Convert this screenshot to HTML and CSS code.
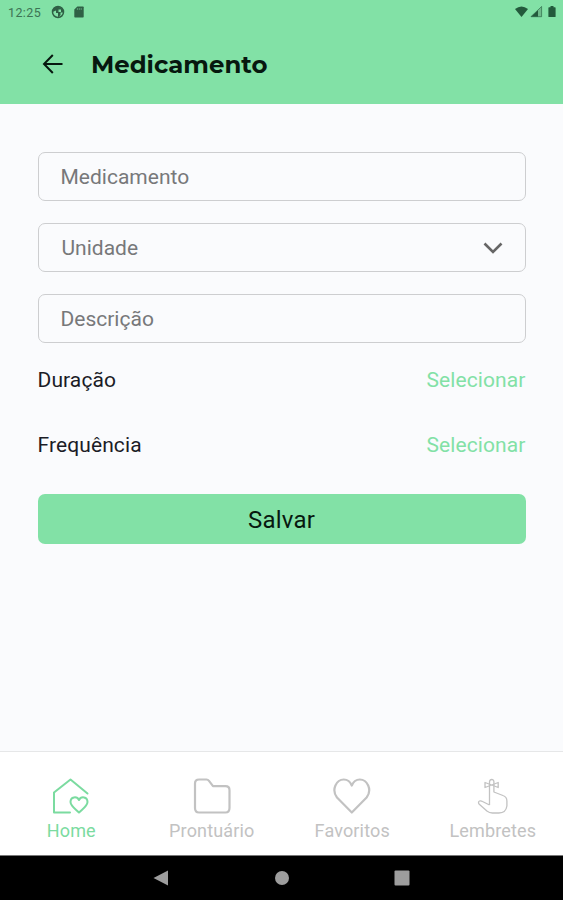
FILE: index.html
```html
<!DOCTYPE html>
<html lang="pt-br">
<head>
    <meta charset="UTF-8">
    <meta name="viewport" content="width=device-width, initial-scale=1.0">
    <title>Medicamento</title>
    <link rel="stylesheet" href="styles.css">
</head>
<body>

    <header class="header">
        <div class="status-bar">
            <span class="hora">12:25</span>
            <svg class="status-app" width="14" height="14" viewBox="0 0 14 14">
                <circle cx="7" cy="7" r="5.5" fill="none" stroke="#2f6045" stroke-width="1.5"/>
                <path d="M1.500 7Q2 2 7 1.500q3.500.5 5 3.500v2.500H9.500V10L7 12.500V8H5V5.500z" fill="#2f6045"/>
                <path d="M7.500 4.500h2.500V7H7.500z" fill="#82e1a6"/>
            </svg>
            <svg class="status-sd" width="10" height="12" viewBox="0 0 10 12">
                <path d="M3.300.5H9q.7 0 .7.7v9.600q0 .7-.7.7H1q-.7 0-.7-.7V3.500z" fill="#2f6045"/>
                <path d="M3.400 2v2M5.300 2v2M7.200 2v2" stroke="#65ab82" stroke-width=".8"/>
            </svg>
            <svg class="status-sinais" width="42" height="14" viewBox="0 0 42 14">
                <path d="M0 4Q6.500-1 13 4L6.500 12z" fill="#235a3c"/>
                <path d="M15.500 12 27 1v11z" fill="#6fba8b"/>
                <path d="M15.500 12 23 5v7z" fill="#235a3c"/>
                <path d="M16 11.700 26.600 1.500v10.200z" fill="none" stroke="#397a55" stroke-width=".8"/>
                <path d="M35.500 1h3v1.300H40q.6 0 .6.600v8.500q0 .6-.6.600h-6q-.6 0-.6-.6V2.900q0-.6.600-.6h1.500z" fill="#235a3c"/>
            </svg>
        </div>
        <div class="titulo-bar">
            <svg class="voltar" width="22" height="22" viewBox="0 0 22 22">
                <path d="M20.500 11H2M10.800 2 2 11l8.800 9" fill="none" stroke="#07180f" stroke-width="2"/>
            </svg>
            <h1>Medicamento</h1>
        </div>
    </header>

    <main class="formulario">
        <div class="campo">Medicamento</div>
        <div class="campo campo-select">
            <span>Unidade</span>
            <svg width="20" height="12" viewBox="0 0 20 12">
                <path d="M1.500 1.500 10 10l8.500-8.500" fill="none" stroke="#666" stroke-width="2.600"/>
            </svg>
        </div>
        <div class="campo">Descrição</div>

        <div class="linha">
            <span>Duração</span>
            <a class="selecionar">Selecionar</a>
        </div>
        <div class="linha">
            <span>Frequência</span>
            <a class="selecionar">Selecionar</a>
        </div>

        <button class="salvar">Salvar</button>
    </main>

    <nav class="menu">
        <a class="menu-item ativo">
            <svg width="38" height="38" viewBox="0 0 38 38" fill="none" stroke="currentColor" stroke-width="2" stroke-linecap="round" stroke-linejoin="round">
                <path d="M18 35.500H2V15.500L18.500 2.500 35.500 16.500"/>
                <path d="M27 35.500C23.500 32 18.500 29 18.500 25c0-5.500 6.500-6 8.500-2 2-4 8.500-3.500 8.500 2 0 4-5 7-8.500 10.500z"/>
            </svg>
            <span>Home</span>
        </a>
        <a class="menu-item">
            <svg width="38" height="38" viewBox="0 0 38 38" fill="none" stroke="currentColor" stroke-width="2.200" stroke-linejoin="round">
                <path d="M6 2.500h7.500q1.500 0 2.500 1.300L20 9.200h12.500q4 0 4 4V31q0 4.500-4 4.500H6q-4 0-4-4.500V6.500q0-4 4-4z"/>
            </svg>
            <span>Prontuário</span>
        </a>
        <a class="menu-item">
            <svg width="38" height="38" viewBox="0 0 38 38" fill="none" stroke="currentColor" stroke-width="2.200" stroke-linejoin="round">
                <path d="M18.800 35.500 4 20.500C-2 12.500 3.500 2.500 10.800 2.500c4 0 6.500 2.300 8 6 1.500-3.700 4-6 8-6 7.300 0 12.800 10 6.800 18z"/>
            </svg>
            <span>Favoritos</span>
        </a>
        <a class="menu-item">
            <svg width="38" height="38" viewBox="0 0 38 38" fill="none" stroke="currentColor" stroke-width="1.300" stroke-linejoin="round">
                <path d="M15.500 28V5q0-2.500 2.200-2.500T19.900 5v10l9 3.500q4 1.300 4 5.500v5q-1 7-8 7h-6.500q-3 0-5.500-2L5 27q-1.200-2 .5-3 1.500-.5 3 .5l7 3.500"/>
                <path d="M17.700 8 11 5.500v5zM17.700 8l6.500-2.500v5z"/>
            </svg>
            <span>Lembretes</span>
        </a>
    </nav>

    <footer class="sistema">
        <svg width="16" height="18" viewBox="0 0 16 18"><path d="M.5 9 15 1.500v15z" fill="#9d9d9d"/></svg>
        <svg width="16" height="18" viewBox="0 0 16 18"><circle cx="8" cy="9" r="7" fill="#9d9d9d"/></svg>
        <svg width="16" height="18" viewBox="0 0 16 18"><rect x=".5" y="1.500" width="15" height="15" rx="1" fill="#9d9d9d"/></svg>
    </footer>

</body>
</html>
```
FILE: styles.css
```css
* {
    box-sizing: border-box;
}
body {
    margin: 0;
    height: 900px;
    display: flex;
    flex-direction: column;
    font-family: Roboto, sans-serif;
    background-color: #fafbfd;
    overflow: hidden;
}
svg {
    display: block;
    flex-shrink: 0;
}
.header {
    height: 104px;
    background: #82e1a6;
}
.status-bar {
    display: flex;
    align-items: center;
    height: 24px;
    padding: 0 6px 0 8px;
}
.hora {
    width: 43px;
    font-size: 12.5px;
    letter-spacing: 0.4px;
    color: #3c7354;
}
.status-sd {
    margin-left: 9px;
}
.status-sinais {
    margin-left: auto;
}
.titulo-bar {
    display: flex;
    align-items: center;
    height: 80px;
    padding-left: 42px;
}
h1 {
    margin: 0 0 0 27px;
    font-family: Montserrat, Inter, sans-serif;
    font-size: 24.4px;
    font-weight: 700;
    color: #07180f;
}
.formulario {
    flex: 1;
    display: flex;
    flex-direction: column;
    padding: 48px 37.5px 0 37.5px;
}
.campo {
    display: flex;
    align-items: center;
    height: 49px;
    margin-bottom: 22px;
    padding: 0 22px;
    border: 1.5px solid #cdced0;
    border-radius: 7px;
    font-size: 21px;
    color: #77787a;
}
.campo-select {
    justify-content: space-between;
    padding-left: 23px;
}
.linha {
    display: flex;
    justify-content: space-between;
    align-items: center;
    height: 24px;
    margin-bottom: 41px;
    font-size: 21px;
    letter-spacing: 0.1px;
    color: #1b1c26;
}
.campo + .linha {
    margin-top: 3px;
}
.selecionar {
    color: #82e1a6;
}
.salvar {
    height: 50px;
    margin-top: -4px;
    padding: 2px 0 0;
    border: none;
    border-radius: 7px;
    background: #82e1a6;
    font-family: Roboto, sans-serif;
    font-size: 24px;
    letter-spacing: 0.2px;
    color: #07180f;
}
.menu {
    display: flex;
    height: 104px;
    padding: 25px 0 0 1px;
    border-top: 1px solid #e6e7e8;
    background: #fff;
}
.menu-item {
    flex: 1;
    display: flex;
    flex-direction: column;
    align-items: center;
    gap: 5px;
    font-size: 18px;
    line-height: 22px;
    letter-spacing: 0.15px;
    color: #c2c2c2;
}
.ativo {
    color: #7bdba0;
}
.sistema {
    display: flex;
    justify-content: center;
    align-items: center;
    gap: 104.5px;
    height: 45px;
    border-top: 1px solid #777;
    background: #000;
}
```
